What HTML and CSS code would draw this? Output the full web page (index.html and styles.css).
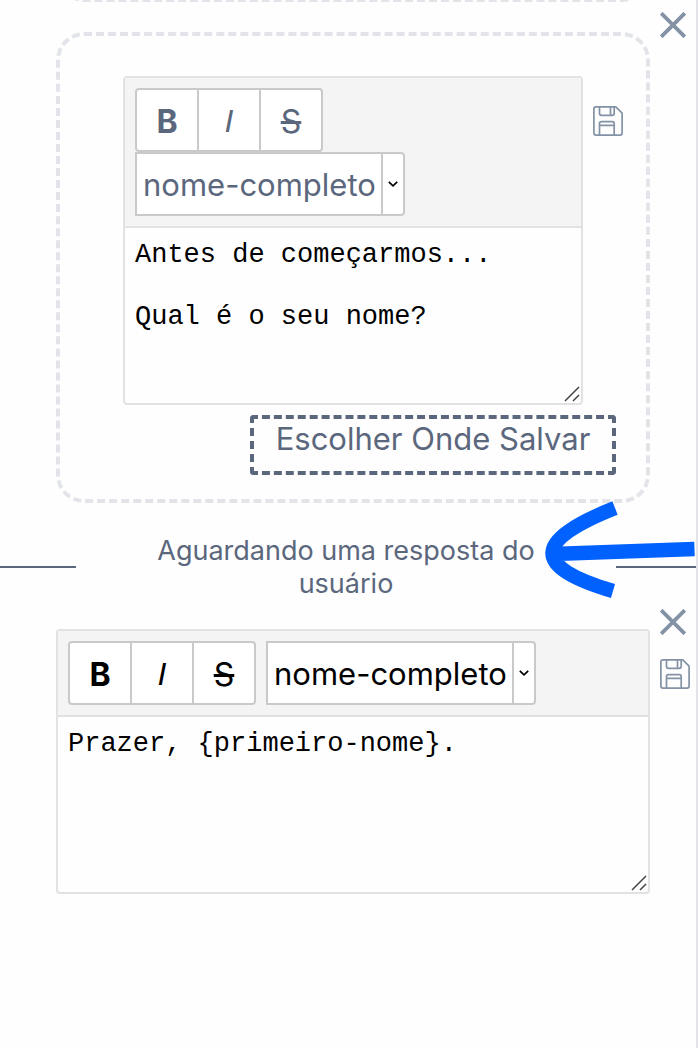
FILE: index.html
```
<!DOCTYPE html>
<html lang="pt-BR">
<head>
    <meta charset="UTF-8">
    <meta name="viewport" content="width=device-width, initial-scale=1.0">
    <title>Editor de mensagens</title>
    <link rel="stylesheet" href="styles.css">
</head>
<body>

    <!-- Shared icons -->
    <svg class="icon-defs" aria-hidden="true">
        <symbol id="icon-close" viewBox="0 0 26 26">
            <path d="M1.2 1.2L24.8 24.8M24.8 1.2L1.2 24.8" fill="none" stroke="currentColor" stroke-width="3.8"/>
        </symbol>
        <symbol id="icon-save" viewBox="0 0 30 30">
            <g fill="none" stroke="currentColor" stroke-width="1.7" stroke-linejoin="round">
                <path d="M2.9 .9H22.8L29.1 7.2V27.1A2 2 0 0 1 27.1 29.1H2.9A2 2 0 0 1 .9 27.1V2.9A2 2 0 0 1 2.9 .9Z"/>
                <path d="M6.5 .9V7.3A2 2 0 0 0 8.5 9.3H19.2A2 2 0 0 0 21.2 7.3V.9M17.5 .9V9.3"/>
                <path d="M6.5 29.1V17.7A2 2 0 0 1 8.5 15.7H19.2A2 2 0 0 1 21.2 17.7V29.1M6.5 19.4H21.2"/>
            </g>
        </symbol>
        <symbol id="icon-chevron" viewBox="0 0 10 6">
            <path d="M.8 .8L5 4.8L9.2 .8" fill="none" stroke="#000" stroke-width="1.7"/>
        </symbol>
        <symbol id="icon-grip" viewBox="0 0 16 16">
            <path d="M1 15L15 1M9 15L15 9" fill="none" stroke="#444" stroke-width="1.5"/>
        </symbol>
    </svg>

    <main class="panel">
        <div class="previous-step">
            <div class="previous-card"></div>
        </div>

        <!-- Question -->
        <section class="step">
            <div class="card">
                <div class="card-row">
                    <div class="editor muted">
                        <div class="toolbar">
                            <div class="format-group">
                                <button type="button" class="format-btn bold" aria-label="Negrito">B</button>
                                <button type="button" class="format-btn italic" aria-label="Itálico">I</button>
                                <button type="button" class="format-btn strike" aria-label="Tachado">S</button>
                            </div>
                            <div class="picker">
                                <select class="picker-select" aria-label="Variável">
                                    <option>nome-completo</option>
                                    <option>primeiro-nome</option>
                                </select>
                                <span class="picker-arrow"><svg class="chevron"><use href="#icon-chevron"/></svg></span>
                            </div>
                        </div>
                        <textarea class="message" aria-label="Pergunta">Antes de começarmos...

Qual é o seu nome?</textarea>
                        <svg class="grip"><use href="#icon-grip"/></svg>
                    </div>
                    <button type="button" class="icon-btn card-save" aria-label="Salvar"><svg class="icon-save"><use href="#icon-save"/></svg></button>
                </div>
                <button type="button" class="save-target">Escolher Onde Salvar</button>
            </div>
            <div class="actions">
                <button type="button" class="icon-btn" aria-label="Remover"><svg class="icon-close"><use href="#icon-close"/></svg></button>
            </div>
        </section>

        <div class="waiting">
            <p class="waiting-text">Aguardando uma resposta do usuário</p>
            <svg class="arrow" viewBox="544 500 152 100" aria-hidden="true">
                <path d="M615 508C532 541 532 567 613 591M553 554L694.5 549" fill="none" stroke="#0061ff" stroke-width="14.4"/>
            </svg>
        </div>

        <!-- Reply -->
        <section class="step">
            <div class="editor">
                <div class="toolbar">
                    <div class="format-group">
                        <button type="button" class="format-btn bold" aria-label="Negrito">B</button>
                        <button type="button" class="format-btn italic" aria-label="Itálico">I</button>
                        <button type="button" class="format-btn strike" aria-label="Tachado">S</button>
                    </div>
                    <div class="picker">
                        <select class="picker-select" aria-label="Variável">
                            <option>nome-completo</option>
                            <option>primeiro-nome</option>
                        </select>
                        <span class="picker-arrow"><svg class="chevron"><use href="#icon-chevron"/></svg></span>
                    </div>
                </div>
                <textarea class="message" aria-label="Resposta">Prazer, {primeiro-nome}.</textarea>
                <svg class="grip"><use href="#icon-grip"/></svg>
            </div>
            <div class="actions">
                <button type="button" class="icon-btn" aria-label="Remover"><svg class="icon-close"><use href="#icon-close"/></svg></button>
                <button type="button" class="icon-btn" aria-label="Salvar"><svg class="icon-save"><use href="#icon-save"/></svg></button>
            </div>
        </section>
    </main>

</body>
</html>
```
FILE: styles.css
```
* {
    box-sizing: border-box;
}

body {
    margin: 0;
    font-family: Inter, "Liberation Sans", sans-serif;
    background-color: #fefefe;
    color: #000;
}

button,
select {
    font-family: inherit;
    color: inherit;
    margin: 0;
    padding: 0;
}

.icon-defs {
    display: none;
}

.panel {
    min-height: 100vh;
    border-right: 2px solid #e2e4e9;
}

/* Only the lower edge of the card above is in view */
.previous-step {
    display: flex;
    align-items: flex-end;
    height: 2px;
    overflow: hidden;
    padding: 0 46px 0 56px;
    margin-bottom: 10px;
}

.previous-card {
    flex: 1;
    height: 100px;
    border: 4px dashed #e2e4e9;
    border-radius: 28px;
}

.step {
    display: grid;
    grid-template-columns: 1fr 36px;
    column-gap: 10px;
    padding-left: 56px;
}

.step > .card,
.step > .editor {
    margin-top: 20px;
}

.card {
    display: flex;
    flex-direction: column;
    gap: 10px;
    padding: 40px 23px 24px 63px;
    border: 4px dashed #e2e4e9;
    border-radius: 28px;
}

.card-row {
    display: grid;
    grid-template-columns: 1fr 30px;
    column-gap: 10px;
    align-items: start;
}

.card-save {
    margin-top: 30px;
}

.editor {
    position: relative;
    border: 2px solid #e2e2e2;
    border-radius: 4px;
}

.toolbar {
    display: flex;
    flex-wrap: wrap;
    column-gap: 10px;
    padding: 10px;
    background-color: #f4f4f4;
    border-bottom: 2px solid #e2e2e2;
}

.muted .toolbar {
    flex-direction: column;
}

.muted .format-group,
.muted .picker {
    color: #5b677d;
}

.format-group {
    display: flex;
    width: 188px;
    height: 64px;
    background-color: #fff;
    border: 2px solid #c9c9c9;
    border-radius: 4px;
}

.format-btn {
    flex: 1;
    padding-top: 2px;
    font-size: 32px;
    background: none;
    border: none;
    cursor: pointer;
}

.format-btn + .format-btn {
    border-left: 2px solid #c9c9c9;
}

.bold {
    font-weight: bold;
}

.italic {
    font-family: "Liberation Sans", Arial, sans-serif;
    font-style: italic;
}

.strike {
    text-decoration: line-through;
}

.picker {
    display: flex;
    width: 270px;
    height: 64px;
    background-color: #fff;
    border: 2px solid #c9c9c9;
    border-radius: 0 4px 4px 0;
}

.picker-select {
    flex: 1;
    min-width: 0;
    padding-left: 6px;
    font-size: 31px;
    background: none;
    border: none;
    appearance: none;
}

.picker-arrow {
    display: flex;
    align-items: center;
    justify-content: center;
    width: 22px;
    border-left: 2px solid #c9c9c9;
}

.chevron {
    width: 10px;
    height: 6px;
}

.message {
    display: block;
    width: 100%;
    height: 175px;
    padding: 12px 10px;
    font-family: "Liberation Mono", "Courier New", monospace;
    font-size: 27px;
    line-height: 31px;
    color: #000;
    background: none;
    border: none;
    resize: none;
}

.grip {
    position: absolute;
    right: 1px;
    bottom: 1px;
    width: 16px;
    height: 16px;
}

.save-target {
    align-self: flex-end;
    width: 366px;
    height: 60px;
    margin-right: 7px;
    padding-bottom: 12px;
    font-size: 31px;
    line-height: 40px;
    color: #5b677d;
    background: none;
    border: 4px dashed #5b677d;
    border-radius: 4px;
    cursor: pointer;
}

.actions {
    display: flex;
    flex-direction: column;
    align-items: flex-start;
    gap: 24px;
}

.icon-btn {
    color: #8492a6;
    background: none;
    border: none;
    cursor: pointer;
}

.icon-close,
.icon-save {
    display: block;
}

.icon-close {
    width: 26px;
    height: 26px;
}

.icon-save {
    width: 30px;
    height: 30px;
}

.waiting {
    position: relative;
    display: flex;
    align-items: center;
    padding: 31px 0 9px;
}

.waiting::before,
.waiting::after {
    content: "";
    width: 76px;
    height: 2px;
    background-color: #5b677d;
}

.waiting::after {
    width: 80px;
}

.waiting-text {
    flex: 1;
    margin: 0;
    padding: 0 60px;
    font-size: 27px;
    line-height: 33px;
    text-align: center;
    color: #5b677d;
}

/* Hand-drawn arrow pointing at the label */
.arrow {
    position: absolute;
    top: -3px;
    right: 0;
    width: 152px;
    height: 100px;
}
```
